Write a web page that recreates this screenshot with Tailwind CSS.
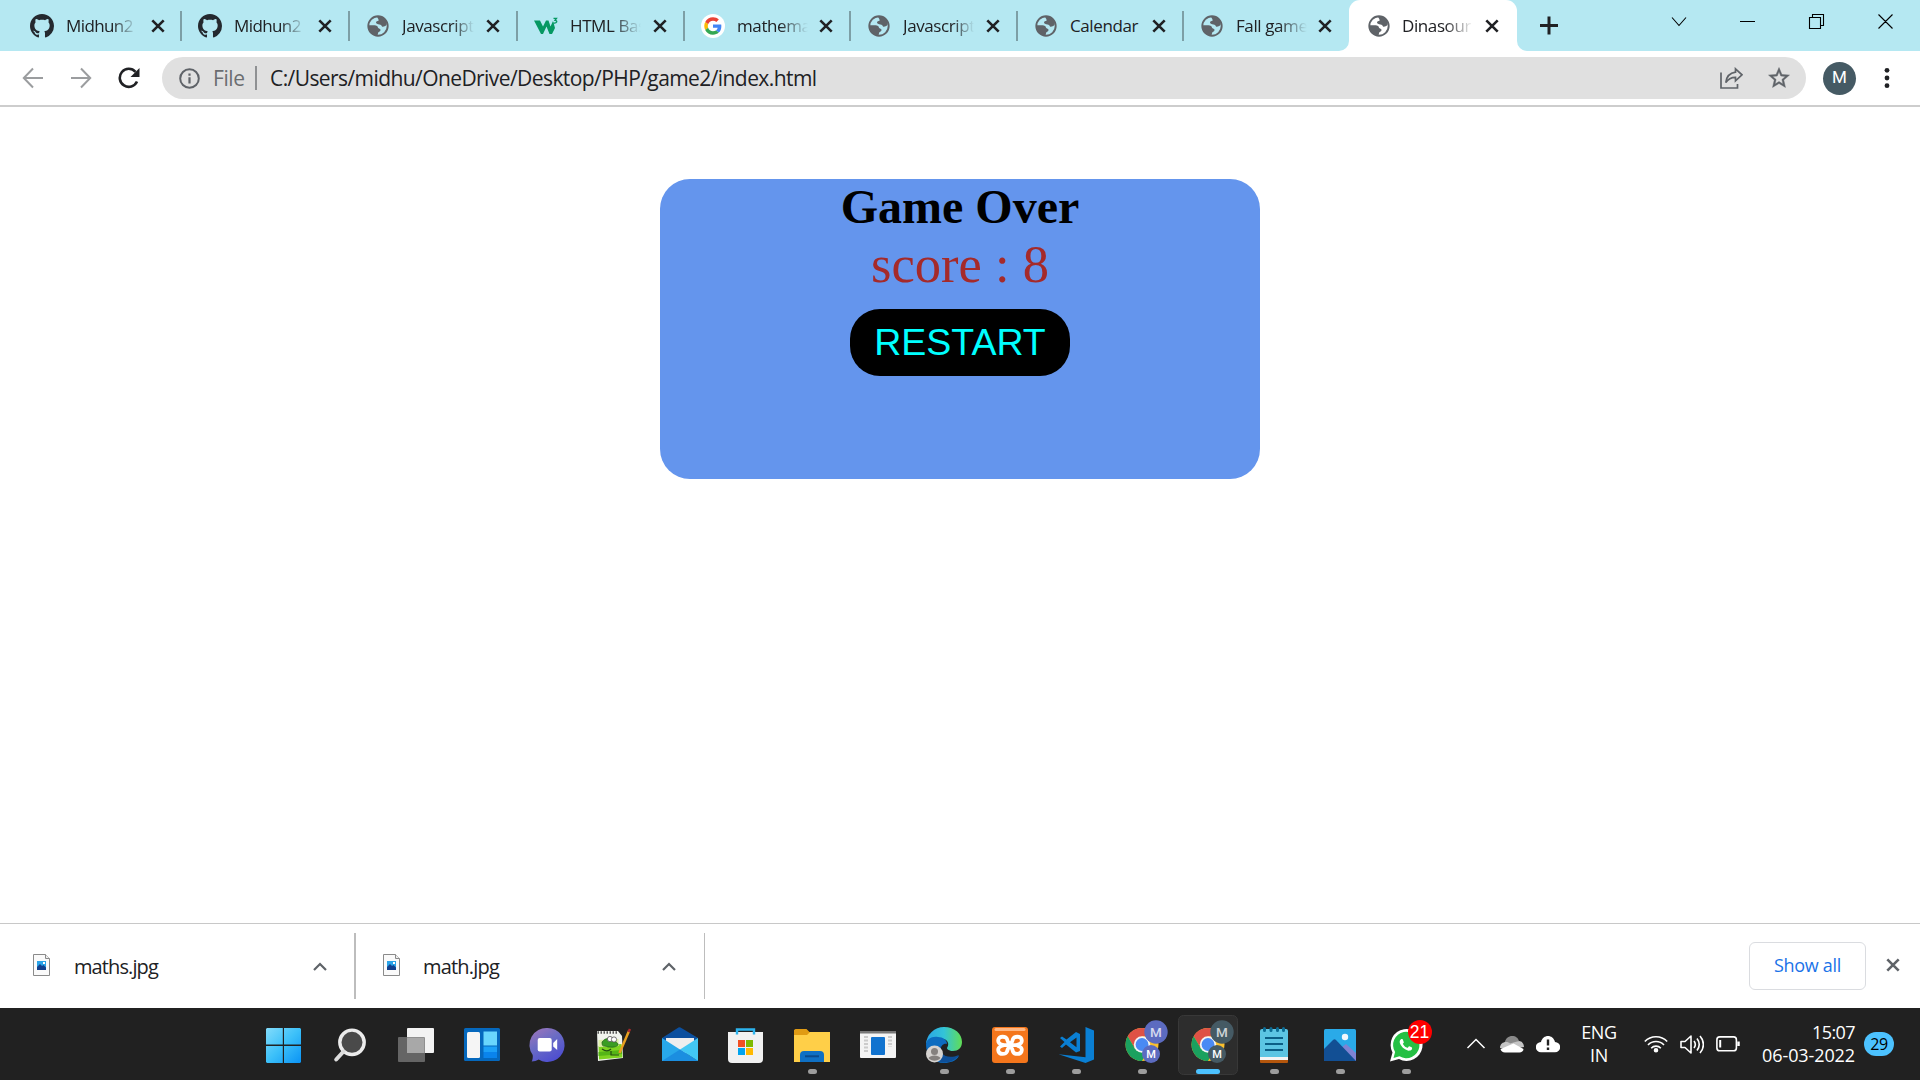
<!DOCTYPE html>
<html lang="en">
<head>
<meta charset="utf-8">
<title>Dinasour game</title>
<script src="https://cdn.jsdelivr.net/npm/@tailwindcss/browser@4"></script>
</head>
<body class="flex h-[1080px] w-[1920px] flex-col overflow-hidden bg-white font-['Open_Sans','Noto_Sans',sans-serif] text-[#202124]">

<!-- shared symbols -->
<svg class="hidden">
  <symbol id="github" viewBox="0 0 16 16"><path fill="#24292f" d="M8 0C3.58 0 0 3.58 0 8c0 3.54 2.29 6.53 5.47 7.59.4.07.55-.17.55-.38 0-.19-.01-.82-.01-1.49-2.01.37-2.53-.49-2.69-.94-.09-.23-.48-.94-.82-1.13-.28-.15-.68-.52-.01-.53.63-.01 1.08.58 1.23.82.72 1.21 1.87.87 2.33.66.07-.52.28-.87.51-1.07-1.78-.2-3.64-.89-3.64-3.95 0-.87.31-1.59.82-2.15-.08-.2-.36-1.02.08-2.12 0 0 .67-.21 2.2.82.64-.18 1.32-.27 2-.27s1.36.09 2 .27c1.53-1.04 2.2-.82 2.2-.82.44 1.1.16 1.92.08 2.12.51.56.82 1.27.82 2.15 0 3.07-1.87 3.75-3.65 3.95.29.25.54.73.54 1.48 0 1.07-.01 1.93-.01 2.2 0 .21.15.46.55.38A8.01 8.01 0 0 0 16 8c0-4.42-3.58-8-8-8z"/></symbol>
  <symbol id="globe" viewBox="0 0 24 24"><circle cx="12" cy="12" r="9.700" fill="none" stroke="#5f6368" stroke-width="1.900"/><path fill="#5f6368" d="M10.500 2.200C15 1.800 19 4 21 8.500L20.500 11C19 12.500 17 13 16 12.500C15.500 11.500 15 10.800 13.500 10.500C11.500 10.300 10 9.800 10 8.600C10 7.300 11.500 7.200 12.500 6.800C13 5.500 12 4.500 10.500 2.200zM2.500 11.200H8.500C10.500 11.200 12 12.300 12 13.800C12.500 14.800 14.500 14.500 14.500 16C14.500 17.500 12.800 17.500 12.200 18.500L11.500 21.500C6.500 21.500 2 17 2.500 11.200z"/></symbol>
  <symbol id="x" viewBox="0 0 14 14"><path d="M1.300 1.300l11.400 11.400M12.700 1.300L1.300 12.700" stroke="currentColor" stroke-width="2.600" fill="none"/></symbol>
  <symbol id="chrome" viewBox="-17 -17 34 34">
    <circle r="16.500" fill="#fbc02d"/>
    <path d="M-14.300-8.200A16.500 16.500 0 0 1 14.300-8.200L0-8.200 -7.100 4.100z" fill="#de5246"/>
    <path d="M-14.300-8.200A16.500 16.500 0 0 0 0 16.500L7.100 4.100 -7.100 4.100z" fill="#1aa15f"/>
    <circle r="8.200" fill="#f5f5f5"/><circle r="6.400" fill="#4a8af4"/>
  </symbol>
  <symbol id="image-file" viewBox="0 0 17 22"><path d="M.5.500h12l4 4v17H.5z" fill="#fafafa" stroke="#8a8a8a"/><path d="M12.500.500v4h4" fill="#eee" stroke="#8a8a8a"/><rect x="4" y="7" width="9" height="9" fill="#29a3e8"/><path d="M4 13l3-3 2 2 1.500-1 2.500 2.500V16H4z" fill="#123f8c"/><rect x="10" y="8" width="2" height="2" fill="#fff"/></symbol>
</svg>

<!-- tab strip -->
<header class="flex h-[51px] shrink-0 bg-[#b5e8f2] pl-[13px] text-[17px] tracking-[-0.4px]">
  <div class="flex w-[167px] items-center pl-[17px]"><svg class="size-6"><use href="#github"/></svg><span class="ml-[12px] w-[71px] overflow-hidden whitespace-nowrap tracking-[-0.6px] [mask-image:linear-gradient(to_right,#000_65%,transparent)]">Midhun2</span><svg class="ml-[14px] size-[14px]"><use href="#x"/></svg></div>
  <div class="flex w-[168px] items-center"><i class="h-[30px] w-0.5 bg-[#7d9fa6]"></i><svg class="ml-[16px] size-6"><use href="#github"/></svg><span class="ml-[12px] w-[71px] overflow-hidden whitespace-nowrap tracking-[-0.6px] [mask-image:linear-gradient(to_right,#000_65%,transparent)]">Midhun2</span><svg class="ml-[13px] size-[14px]"><use href="#x"/></svg></div>
  <div class="flex w-[168px] items-center"><i class="h-[30px] w-0.5 bg-[#7d9fa6]"></i><svg class="ml-[16px] size-6"><use href="#globe"/></svg><span class="ml-[12px] w-[72px] overflow-hidden whitespace-nowrap [mask-image:linear-gradient(to_right,#000_70%,transparent)]">Javascript</span><svg class="ml-[12px] size-[14px]"><use href="#x"/></svg></div>
  <div class="flex w-[167px] items-center"><i class="h-[30px] w-0.5 bg-[#7d9fa6]"></i><svg class="ml-[15px] h-6 w-[26px]" viewBox="0 0 26 24"><path d="M1 8h6l3 6 3-6h2.500l2 6L20 8.500l2 7-3 6h-2.500L13.500 14 10 21.500H8z" fill="#059862" transform="translate(0 -1.500)"/><path d="M20.500 5.300h3l-1.500 2c3 .3 2 3.400-1.700 2.700" fill="none" stroke="#059862" stroke-width="1.300" transform="translate(0 -1)"/></svg><span class="ml-[11px] w-[71px] overflow-hidden whitespace-nowrap [mask-image:linear-gradient(to_right,#000_60%,transparent)]">HTML Basic</span><svg class="ml-[12px] size-[14px]"><use href="#x"/></svg></div>
  <div class="flex w-[166px] items-center"><i class="h-[30px] w-0.5 bg-[#7d9fa6]"></i><svg class="ml-[16px] size-6" viewBox="-9 -9 66 66"><circle cx="24" cy="24" r="33" fill="#fff"/><path fill="#EA4335" d="M24 9.500c3.540 0 6.710 1.220 9.210 3.600l6.850-6.850C35.900 2.380 30.470 0 24 0 14.620 0 6.510 5.380 2.560 13.220l7.980 6.190C12.430 13.720 17.740 9.500 24 9.500z"/><path fill="#4285F4" d="M46.980 24.550c0-1.570-.15-3.090-.38-4.550H24v9.020h12.940c-.58 2.960-2.260 5.480-4.780 7.180l7.730 6c4.510-4.180 7.090-10.360 7.090-17.650z"/><path fill="#FBBC05" d="M10.530 28.590c-.48-1.450-.76-2.990-.76-4.590s.27-3.140.76-4.590l-7.980-6.190C.920 16.460 0 20.120 0 24c0 3.880.92 7.540 2.560 10.780l7.970-6.190z"/><path fill="#34A853" d="M24 48c6.480 0 11.930-2.130 15.890-5.810l-7.730-6c-2.150 1.450-4.920 2.300-8.160 2.300-6.260 0-11.570-4.220-13.470-9.910l-7.980 6.190C6.510 42.620 14.620 48 24 48z"/></svg><span class="ml-[12px] w-[71px] overflow-hidden whitespace-nowrap [mask-image:linear-gradient(to_right,#000_60%,transparent)]">mathematics</span><svg class="ml-[11px] size-[14px]"><use href="#x"/></svg></div>
  <div class="flex w-[167px] items-center"><i class="h-[30px] w-0.5 bg-[#7d9fa6]"></i><svg class="ml-[16px] size-6"><use href="#globe"/></svg><span class="ml-[12px] w-[71px] overflow-hidden whitespace-nowrap [mask-image:linear-gradient(to_right,#000_70%,transparent)]">Javascript</span><svg class="ml-[12px] size-[14px]"><use href="#x"/></svg></div>
  <div class="flex w-[166px] items-center"><i class="h-[30px] w-0.5 bg-[#7d9fa6]"></i><svg class="ml-[16px] size-6"><use href="#globe"/></svg><span class="ml-[12px] w-[71px] overflow-hidden whitespace-nowrap">Calendar</span><svg class="ml-[11px] size-[14px]"><use href="#x"/></svg></div>
  <div class="flex w-[167px] items-center"><i class="h-[30px] w-0.5 bg-[#7d9fa6]"></i><svg class="ml-[16px] size-6"><use href="#globe"/></svg><span class="ml-[12px] w-[71px] overflow-hidden whitespace-nowrap [mask-image:linear-gradient(to_right,#000_60%,transparent)]">Fall game</span><svg class="ml-[11px] size-[14px]"><use href="#x"/></svg></div>
  <div class="relative flex w-[168px] items-center rounded-t-[11px] bg-white pl-[18px]">
    <svg class="absolute bottom-0 -left-2.5 size-2.5" viewBox="0 0 10 10"><path d="M10 0v10H0A10 10 0 0 0 10 0z" fill="#fff"/></svg>
    <svg class="absolute -right-2.5 bottom-0 size-2.5" viewBox="0 0 10 10"><path d="M0 0v10h10A10 10 0 0 1 0 0z" fill="#fff"/></svg>
    <svg class="size-6"><use href="#globe"/></svg><span class="ml-[11px] w-[71px] overflow-hidden whitespace-nowrap [mask-image:linear-gradient(to_right,#000_60%,transparent)]">Dinasour</span><svg class="ml-[12px] size-[14px]"><use href="#x"/></svg>
  </div>
  <svg class="ml-[23px] h-[51px] w-[18px]" viewBox="0 0 18 51"><path d="M9 16.500v18M0 25.500h18" stroke="#202124" stroke-width="3"/></svg>
  <svg class="ml-[112px] h-[51px] w-[224px]" viewBox="0 0 224 51" fill="none" stroke="#000" stroke-width="1.100"><path d="M2 17.500l7 8 7-8M70 21.500h15M139.500 17.500h11v11h-11zM142.500 17v-2.500h11v11H151M208.500 14.500l14 14M222.500 14.500l-14 14"/></svg>
</header>

<!-- toolbar -->
<div class="flex h-14 shrink-0 items-center border-b-2 border-[#cdcdcd] pl-[22px]">
  <svg class="size-[22px]" viewBox="0 0 22 22" fill="none" stroke="#9b9d9f" stroke-width="2"><path d="M21 11H2M11 1.500L1.800 11 11 20.500"/></svg>
  <svg class="ml-[26px] size-[22px]" viewBox="0 0 22 22" fill="none" stroke="#9b9d9f" stroke-width="2"><path d="M1 11h19M11 1.500l9.200 9.500L11 20.500"/></svg>
  <svg class="ml-[26px] size-[22px]" viewBox="0 0 22 22"><path d="M19 14.500A9 9 0 1 1 17.500 4.800" fill="none" stroke="#202124" stroke-width="2.600"/><path d="M21.500 1v9h-9z" fill="#202124"/></svg>
  <div class="ml-[22px] flex h-[42px] w-[1644px] items-center rounded-full bg-[#e0e0e0] pl-[17px] text-[21px]">
    <svg class="size-[21px]" viewBox="0 0 21 21"><circle cx="10.500" cy="10.500" r="9.300" fill="none" stroke="#5f6368" stroke-width="2"/><path d="M9.400 9.200h2.200v6.200H9.400zM9.400 5.500h2.200v2.200H9.400z" fill="#5f6368"/></svg>
    <span class="ml-[13px] w-[42px] pt-px tracking-[-0.4px] text-[#6b6d70]">File</span>
    <i class="h-6 w-0.5 bg-[#8f9193]"></i>
    <span class="ml-[13px] w-[1450px] pt-px tracking-[-0.58px] whitespace-nowrap">C:/Users/midhu/OneDrive/Desktop/PHP/game2/index.html</span>
    <svg class="h-[22px] w-[23px]" viewBox="0 0 23 22" fill="none" stroke="#5f6368" stroke-width="1.700"><path d="M1 5.500V21h16.500v-4M15.500 1.800l6.500 6-6.500 6v-3.500C11 10.300 8 12 5.800 15.500 6.500 9.500 10 6 15.500 5.200z"/></svg>
    <svg class="ml-[25px] size-[22px]" viewBox="1.500 1.500 21 21"><path fill="#5f6368" stroke="#5f6368" stroke-width=".4" d="M22 9.240l-7.190-.62L12 2 9.190 8.630 2 9.240l5.460 4.730L5.820 21 12 17.270 18.180 21l-1.630-7.030L22 9.240zM12 15.400l-3.760 2.270 1-4.280-3.320-2.880 4.380-.38L12 6.100l1.710 4.040 4.380.38-3.320 2.880 1 4.280L12 15.400z"/></svg>
  </div>
  <div class="ml-[17px] flex size-[33px] items-center justify-center rounded-full bg-[#455a64] font-[Roboto,sans-serif] text-[17px] text-white">M</div>
  <svg class="ml-[28px] h-[22px] w-[6px]" viewBox="0 0 6 22" fill="#202124"><circle cx="3" cy="3.300" r="2.400"/><circle cx="3" cy="11" r="2.400"/><circle cx="3" cy="18.700" r="2.400"/></svg>
</div>

<!-- page -->
<main class="flex grow flex-col items-center pt-[72px]">
  <section class="flex h-[300px] w-[600px] flex-col items-center rounded-[30px] bg-[#6495ed] font-['Liberation_Serif',serif]">
    <h1 class="h-[56px] text-[48px] leading-[56px] font-bold text-black">Game Over</h1>
    <p class="h-[60px] text-[52.500px] leading-[58px] text-[#a52a2a]">score : 8</p>
    <button class="mt-[14px] h-[67px] w-[220px] rounded-[30px] bg-black font-['Liberation_Sans',sans-serif] text-[37.500px] leading-[67px] text-[#00ffff]">RESTART</button>
  </section>
</main>

<!-- downloads -->
<div class="flex h-[85px] shrink-0 items-center border-t border-[#c8c8c8] text-[20px]">
  <div class="flex h-[66px] w-[356px] items-center border-r-2 border-[#bdbdbd] pl-[33px]"><svg class="mb-0.5 h-[22px] w-[17px]"><use href="#image-file"/></svg><span class="ml-6 w-[239px] pt-0.5 tracking-[-0.9px]">maths.jpg</span><svg class="h-[9px] w-[14px]" viewBox="0 0 14 9"><path d="M1 8l6-6 6 6" fill="none" stroke="#5f6368" stroke-width="2.200"/></svg></div>
  <div class="flex h-[66px] w-[349px] items-center border-r border-[#bdbdbd] pl-[27px]"><svg class="mb-0.5 h-[22px] w-[17px]"><use href="#image-file"/></svg><span class="ml-[23px] w-[239px] pt-0.5 tracking-[-0.8px]">math.jpg</span><svg class="h-[9px] w-[14px]" viewBox="0 0 14 9"><path d="M1 8l6-6 6 6" fill="none" stroke="#5f6368" stroke-width="2.200"/></svg></div>
  <button class="ml-[1044px] h-[48px] w-[117px] rounded-md border border-[#dadce0] pb-0.5 text-[18px] font-medium tracking-[-0.3px] text-[#1a73e8]">Show all</button>
  <svg class="mb-0.5 ml-[20px] size-[14px] text-[#5f6368]"><use href="#x"/></svg>
</div>

<!-- taskbar -->
<footer class="flex h-[72px] shrink-0 items-center bg-[#212121] pl-[250px] text-white">
  <!-- start -->
  <svg class="h-[72px] w-[66px]" viewBox="0 0 66 72"><defs><linearGradient id="gs" gradientUnits="userSpaceOnUse" x1="16" y1="20" x2="51" y2="55"><stop stop-color="#83dcfb"/><stop offset=".5" stop-color="#3cc0f9"/><stop offset="1" stop-color="#0a93f5"/></linearGradient></defs><path fill="url(#gs)" d="M17 20h15.800v16.500H16V21zM34 20h16l1 1v15.500H34zM16 38h16.800v17H17l-1-1zM34 38h17v16l-1 1H34z"/></svg>
  <!-- search -->
  <svg class="h-[72px] w-[66px]" viewBox="0 0 66 72"><circle cx="36" cy="34.300" r="12.200" fill="#4a4a4a" stroke="#ececec" stroke-width="3.400"/><path d="M27.500 43.500l-7.300 8" stroke="#dcdcdc" stroke-width="4" stroke-linecap="round"/></svg>
  <!-- task view -->
  <svg class="h-[72px] w-[66px]" viewBox="0 0 66 72"><rect x="25" y="20" width="27" height="25" rx="1" fill="#f3f3f3"/><rect x="16" y="29" width="27" height="25" rx="1" fill="#777" fill-opacity=".8"/><path d="M25 30h17v15H25z" fill="#a8a8a8"/></svg>
  <!-- widgets -->
  <svg class="h-[72px] w-[66px]" viewBox="0 0 66 72"><rect x="16" y="20" width="36" height="33" rx="1.500" fill="#0568bd"/><rect x="19" y="24" width="13" height="26" rx="1.500" fill="#f5f5f5"/><path d="M35.500 23.500h13.500v14H35.500z" fill="#69d6fd"/><path d="M35.500 38.500h13.500V44H35.500z" fill="#1ca0f7"/><path d="M35.500 44h13.500v6H35.500z" fill="#0a84ec"/></svg>
  <!-- chat -->
  <svg class="h-[72px] w-[66px]" viewBox="-.7 0 66 72"><defs><linearGradient id="gc" x1="0" y1="0" x2=".6" y2="1"><stop stop-color="#a376ba"/><stop offset=".5" stop-color="#6a6cc4"/><stop offset="1" stop-color="#4f4fd0"/></linearGradient></defs><path d="M33 20a17 17 0 1 1-9 31.500c-2 1.300-4.500 2-7 2 1-2 1.300-4.500 1-6.500A17 17 0 0 1 33 20z" fill="url(#gc)"/><rect x="23" y="30" width="14" height="13.500" rx="2" fill="#fff"/><path d="M38.500 35l4-4v11l-4-3.500z" fill="#fff"/></svg>
  <!-- notepad++ -->
  <svg class="h-[72px] w-[66px]" viewBox="0 0 66 72"><path d="M17 23h21l4 5 1 22-25 3z" fill="#f1f4ee"/><path d="M18.500 38l23-2 1 13.500-23.500 2z" fill="#7ed321"/><path d="M18.500 32l20-1v7l-20 1z" fill="#dff0a8"/><path d="M18.500 44l23.500-2v4l-23.500 2z" fill="#55b516"/><path d="M17.500 24.500h20" stroke="#555" stroke-width="2.500" stroke-dasharray="1.500 1.500"/><path d="M22 34c4-5 8-4 10-1 4 0 6 2 6 4-3 3-7 2-10 2-4-2-6 1-6-5z" fill="#3a9d23" stroke="#1c5c17" stroke-width=".7"/><circle cx="30" cy="31" r="2.600" fill="#fff" stroke="#555" stroke-width=".8"/><circle cx="34" cy="31.500" r="2.600" fill="#fff" stroke="#555" stroke-width=".8"/><path d="M22 41c4 3 7 2 9 0M31 43v4h8" stroke="#234d12" fill="none" stroke-width="1.200"/><path d="M39.500 45L49 23" stroke="#e8a020" stroke-width="2.500"/><path d="M48.500 24l1.500-3" stroke="#a92b2b" stroke-width="2.500"/></svg>
  <!-- mail -->
  <svg class="h-[72px] w-[66px]" viewBox="0 0 66 72"><path d="M16 30l16.500-10.500a2 2 0 0 1 2 0L52 30v14H16z" fill="#0b4f9e"/><path d="M20 30h28v11l-14 8-14-8z" fill="#eee"/><path d="M16 30l36 23H16z" fill="#28a8ea"/><path d="M52 30v23L34 41.500z" fill="#42c8f4"/><path d="M16 53l18-11.500L52 53z" fill="#1b8ee0"/></svg>
  <!-- store -->
  <svg class="h-[72px] w-[66px]" viewBox="0 0 66 72"><path d="M16 24h35v27a4 4 0 0 1-4 4H20a4 4 0 0 1-4-4z" fill="#f1f1f1"/><path d="M25 26.500v-5h17v5" fill="none" stroke="#2cb4ee" stroke-width="2.400"/><path d="M26 32h7v7h-7z" fill="#f25022"/><path d="M34 32h7v7h-7z" fill="#7fba00"/><path d="M26 40h7v7h-7z" fill="#00a4ef"/><path d="M34 40h7v7h-7z" fill="#ffb900"/></svg>
  <!-- explorer -->
  <svg class="h-[72px] w-[66px]" viewBox="0 0 66 72"><path d="M16 22l1.500-1h11l3 3H51l1 1v13H16z" fill="#e09b14"/><path d="M16 27h13l3-3h20v30H16z" fill="#ffcf48"/><path d="M22 54v-7a4 4 0 0 1 4-4h16a4 4 0 0 1 4 4v7z" fill="#0f70c4"/><path d="M27 48.300h14" stroke="#0a4a8c" stroke-width="2"/><rect x="30" y="61" width="9" height="5" rx="2.500" fill="#9d9d9d"/></svg>
  <!-- window app -->
  <svg class="h-[72px] w-[66px]" viewBox="0 0 66 72"><rect x="16" y="23" width="36" height="27" rx="1" fill="#f4f4f4"/><path d="M16 23h36v2.500H16z" fill="#777"/><rect x="27" y="29" width="14" height="18" rx="1" fill="#1173cf"/><path d="M22 28v17M46 28v11" stroke="#ccc" stroke-width="4" stroke-dasharray="2 1.500"/></svg>
  <!-- edge -->
  <svg class="h-[72px] w-[66px]" viewBox="0 0 66 72"><defs><linearGradient id="ge"><stop stop-color="#2aa5e6"/><stop offset=".5" stop-color="#33c3d8"/><stop offset="1" stop-color="#61dd55"/></linearGradient></defs><path d="M16 36a18 18 0 0 1 18-17c11 0 18 7 18 15 0 6-4 9-9 9-4 0-6-2-6-3 2-3 2-7-3-9-7-2-15 0-18 5z" fill="url(#ge)"/><path d="M16 37c0-6 6-9 12-8 5 0 9 3 9 7-3-1-7 2-6 6 1 7 9 10 18 6-3 5-9 7-15 7-10 0-18-8-18-18z" fill="#0d6cc0"/><path d="M31 38c-3 8 6 14 18 9-5 8-18 10-23 4 0-5 0-9 5-13z" fill="#0e4f98"/><circle cx="24.500" cy="46" r="8.500" fill="#d6d3d0"/><circle cx="24.500" cy="43.500" r="3.500" fill="#85817e"/><path d="M18.500 50c2-3.500 10-3.500 12 0-3 3.500-9 3.500-12 0z" fill="#85817e"/><rect x="30" y="61" width="9" height="5" rx="2.500" fill="#9d9d9d"/></svg>
  <!-- xampp -->
  <svg class="h-[72px] w-[66px]" viewBox="0 0 66 72"><rect x="16" y="19" width="36" height="36" rx="3" fill="#f4761c"/><rect x="18.500" y="20" width="31" height="3" rx="1.500" fill="#ffb783"/><path d="M28 37.200h12M28 37.200c-5-1-6.500-3-5.500-6 1.200-3.400 7-3 8.300-.5 1 2 .8 4.500 3.200 4.500s2.200-2.500 3.200-4.500c1.300-2.500 7.100-2.900 8.300.5 1 3-.5 5-5.500 6 5 1 6.500 3.300 5.500 6.300-1.200 3.300-7 3-8.300.5-1-2-.8-4.700-3.200-4.700s-2.200 2.700-3.200 4.700c-1.300 2.500-7.100 2.800-8.300-.5-1-3 .5-5.300 5.500-6.300z" fill="none" stroke="#fff" stroke-width="3.800" stroke-linejoin="round"/><rect x="30" y="61" width="9" height="5" rx="2.500" fill="#9d9d9d"/></svg>
  <!-- vs code -->
  <svg class="h-[72px] w-[66px]" viewBox="0 0 66 72"><path d="M43.500 19L52 22.500v29L43.500 55 16.500 46.300l27 3z" fill="#0a7fd3"/><path d="M34 24l4 2v17l-4 1.500-10-8-4 3.500-2-1.500 4.500-4.500L18 30l2-1.500 4.500 3zM34.500 29.500L28 34.300l6.500 5z" fill="#0a7fd3" fill-rule="evenodd"/><rect x="30" y="61" width="9" height="5" rx="2.500" fill="#9d9d9d"/></svg>
  <!-- chrome, first profile -->
  <svg class="h-[72px] w-[66px] font-[Roboto,sans-serif]" viewBox="0 0 66 72"><use href="#chrome" x="17" y="19.500" width="34" height="34"/><circle cx="48" cy="24" r="11.700" fill="#5c6bc0"/><circle cx="43" cy="46" r="9" fill="#5c6bc0"/><text x="48" y="28.800" font-size="13.500" font-weight="500" text-anchor="middle" fill="#d5d9ef">M</text><text x="43" y="50" font-size="11" font-weight="500" text-anchor="middle" fill="#fff">M</text><rect x="30" y="61" width="9" height="5" rx="2.500" fill="#9d9d9d"/></svg>
  <!-- chrome, active profile -->
  <svg class="h-[72px] w-[66px] font-[Roboto,sans-serif]" viewBox="0 0 66 72"><rect x="4.500" y="7.500" width="59" height="59" rx="5" fill="#2d2d2d" stroke="#383838"/><use href="#chrome" x="17" y="19.500" width="34" height="34"/><circle cx="48" cy="24" r="11.700" fill="#455a64"/><circle cx="43" cy="46" r="9" fill="#455a64"/><text x="48" y="28.800" font-size="13.500" font-weight="500" text-anchor="middle" fill="#cdd3d6">M</text><text x="43" y="50" font-size="11" font-weight="500" text-anchor="middle" fill="#fff">M</text><rect x="22" y="61" width="24" height="5" rx="2.500" fill="#4cc2ff"/></svg>
  <!-- notepad -->
  <svg class="h-[72px] w-[66px]" viewBox="0 0 66 72"><path d="M20 49h28v5a1 1 0 0 1-1 1H21a1 1 0 0 1-1-1z" fill="#b4560c"/><path d="M20 48h28v4H20z" fill="#f4f4f4"/><path d="M20 23a2 2 0 0 1 2-2h24a2 2 0 0 1 2 2v26H20z" fill="#5cc5e3"/><path d="M25 30h18M25 36h18M25 42h18" stroke="#0b5f86" stroke-width="2"/><path d="M24.500 20.500v2M31 20.500v2M37.500 20.500v2M43.500 20.500v2" stroke="#0c6c94" stroke-width="3" stroke-linecap="round"/><rect x="30" y="61" width="9" height="5" rx="2.500" fill="#9d9d9d"/></svg>
  <!-- photos -->
  <svg class="h-[72px] w-[66px]" viewBox="0 0 66 72"><rect x="18" y="21" width="32" height="32" rx="1.500" fill="#2aaae8"/><path d="M36 39l4-3 10 9v8H40z" fill="#7f83d3"/><path d="M18 41l9-9c1-1 2-1 3 0l20 21H18z" fill="#124f94"/><circle cx="39" cy="29" r="3.200" fill="#f2f8fc"/><rect x="30" y="61" width="9" height="5" rx="2.500" fill="#9d9d9d"/></svg>
  <!-- whatsapp -->
  <svg class="h-[72px] w-[66px] font-['Liberation_Sans',sans-serif]" viewBox="0 0 66 72"><path d="M18 53.500l2.500-9A16 16 0 1 1 27 51z" fill="#fff"/><path d="M21.500 50l1.600-6A13.200 13.200 0 1 1 27.500 48.300z" fill="#25c044"/><path transform="translate(21.500 24.500) scale(1.030)" fill="#fff" d="M17.472 14.382c-.297-.149-1.758-.867-2.030-.967-.273-.099-.471-.148-.67.150-.197.297-.767.966-.940 1.164-.173.199-.347.223-.644.075-.297-.150-1.255-.463-2.390-1.475-.883-.788-1.480-1.761-1.653-2.059-.173-.297-.018-.458.130-.606.134-.133.298-.347.446-.520.149-.174.198-.298.298-.497.099-.198.050-.371-.025-.520-.075-.149-.669-1.612-.916-2.207-.242-.579-.487-.5-.669-.510-.173-.008-.371-.010-.570-.010-.198 0-.520.074-.792.372-.272.297-1.040 1.016-1.040 2.479 0 1.462 1.065 2.875 1.213 3.074.149.198 2.096 3.200 5.077 4.487.709.306 1.262.489 1.694.625.712.227 1.360.195 1.871.118.571-.085 1.758-.719 2.006-1.413.248-.694.248-1.289.173-1.413-.074-.124-.272-.198-.570-.347"/><circle cx="48" cy="24" r="12" fill="#f00"/><text x="47.500" y="30" font-size="17.500" text-anchor="middle" fill="#fff">21</text><rect x="30" y="61" width="9" height="5" rx="2.500" fill="#9d9d9d"/></svg>

  <!-- tray -->
  <svg class="ml-[28px] h-[72px] w-[20px]" viewBox="0 0 20 72"><path d="M1.500 40l8.500-8.500 8.500 8.500" fill="none" stroke="#fff" stroke-width="1.500"/></svg>
  <svg class="ml-[14px] h-[72px] w-6" viewBox="0 0 24 72"><path d="M4.500 36C5 30 9 28 12 28c4 0 6 2 7 5l-7 5z" fill="#8a8a8a"/><path d="M0 40c0-4 3-6 6-6 2 0 3 .5 4 1.500L19 33c3 0 5 3 5 6L12 41z" fill="#c5c5c5"/><path d="M.5 41l13-5.500L23.500 41c0 2-2 3.500-4 3.500H5c-2.500 0-4-1.500-4.500-3.500z" fill="#fff"/></svg>
  <svg class="ml-3 h-[72px] w-6" viewBox="0 0 24 72"><path d="M5 44.300a5 5 0 0 1 0-10.300c1-4 4-6 7-6s6 2 7 6a5 5 0 0 1 0 10.300z" fill="#fff"/><path d="M12 31.500v6M12 39.500v2.500" stroke="#212121" stroke-width="2.400"/></svg>
  <div class="ml-[19px] w-10 text-center text-[18px] leading-[23px] tracking-[-0.4px]">ENG<br>IN</div>
  <svg class="ml-[25px] h-[72px] w-6" viewBox="0 0 24 72" fill="none" stroke="#fff" stroke-width="1.600"><path d="M.8 33.500a15.500 15.500 0 0 1 22.400 0M4 37a11 11 0 0 1 16 0M7.200 40.200a6.500 6.500 0 0 1 9.600 0"/><circle cx="12" cy="42.300" r="1.500" fill="#fff"/></svg>
  <svg class="ml-3 h-[72px] w-6" viewBox="0 0 24 72" fill="none" stroke="#fff" stroke-width="1.600" stroke-linejoin="round"><path d="M1 33.500h4l6-5.500v17l-6-5.500H1zM14 33c1.500 2 1.500 5 0 7M17 30.500c3 4 3 8 0 12M20 28c4.500 5 4.500 12 0 17"/></svg>
  <svg class="ml-3 h-[72px] w-6" viewBox="0 0 24 72" fill="none" stroke="#fff" stroke-width="1.600"><rect x=".9" y="28.900" width="19.500" height="13.800" rx="2.800"/><path d="M4.200 32v7.500" stroke-width="2"/><path d="M22.500 33.500v4.500" stroke-width="2.500"/></svg>
  <div class="ml-[15px] w-[100px] text-right text-[18px] leading-[23px] tracking-[-0.1px]"><span class="tracking-[-0.6px]">15:07</span><br>06-03-2022</div>
  <div class="ml-[9px] flex h-6 w-[30px] items-center justify-center rounded-full bg-[#4cc2ff] text-[16px] tracking-[-0.5px] text-black">29</div>
</footer>
</body>
</html>
